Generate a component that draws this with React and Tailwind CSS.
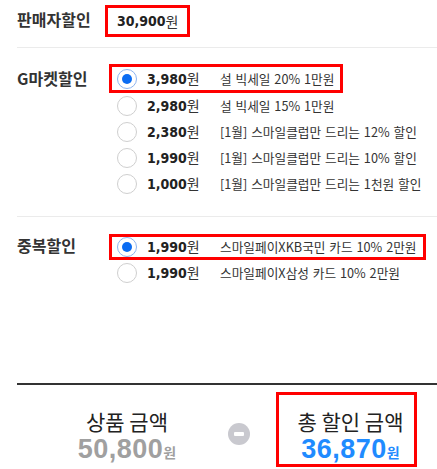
const KR = { fontFamily: '"Noto Sans CJK KR", "Noto Sans", sans-serif' };

function Radio({ checked }) {
  return checked ? (
    <span className="flex h-[20px] w-[20px] shrink-0 items-center justify-center rounded-full border border-[#8db4ef] bg-white">
      <span className="h-[10px] w-[10px] rounded-full bg-[#0b6cf2]" />
    </span>
  ) : (
    <span className="h-[20px] w-[20px] shrink-0 rounded-full border border-[#cfcfcf] bg-white" />
  );
}

function Option({ price, text, checked, tall }) {
  const box = checked
    ? `border-[3px] border-[#ff0000] pl-[5px] ${tall ? "h-[29px]" : "h-[26px]"}`
    : "h-[26px] pl-[8px]";
  return (
    <div className={`flex w-fit items-center pr-[6px] ${box}`}>
      <Radio checked={checked} />
      <span className="ml-[10px] flex w-[73px] items-baseline">
        <span className="text-[14px] font-bold text-[#222] font-['DejaVu_Sans_Condensed','DejaVu_Sans',sans-serif]">{price}</span>
        <span className="text-[14px] text-[#333]" style={KR}>원</span>
      </span>
      <span className="text-[12.7px] text-[#333] whitespace-nowrap [word-spacing:1px]" style={KR}>{text}</span>
    </div>
  );
}

function Total({ value, color }) {
  return (
    <span className={`flex h-[30px] items-baseline leading-[30px] ${color}`}>
      <span className="text-[27px] font-bold tracking-[0.5px] font-['Liberation_Sans',Arial,sans-serif]">{value}</span>
      <span className="text-[14px] font-bold">원</span>
    </span>
  );
}

export default function App() {
  const gmarket = [
    { price: "3,980", text: "설 빅세일 20% 1만원", checked: true },
    { price: "2,980", text: "설 빅세일 15% 1만원" },
    { price: "2,380", text: "[1월] 스마일클럽만 드리는 12% 할인" },
    { price: "1,990", text: "[1월] 스마일클럽만 드리는 10% 할인" },
    { price: "1,000", text: "[1월] 스마일클럽만 드리는 1천원 할인" },
  ];
  const dup = [
    { price: "1,990", text: "스마일페이XKB국민 카드 10% 2만원", checked: true },
    { price: "1,990", text: "스마일페이X삼성 카드 10% 2만원" },
  ];

  return (
    <div className="h-[469px] w-[437px] overflow-hidden bg-white" style={KR}>
      {/* 판매자할인 */}
      <div className="ml-[17px] flex h-[48px] items-start border-b border-[#ebebeb] pt-[5px]">
        <div className="flex h-[27px] w-[88px] items-center text-[16px] font-bold text-[#333]">판매자할인</div>
        <div className="flex h-[32px] items-center border-[3px] border-[#ff0000] pl-[9px] pr-[8px]">
          <span className="text-[14px] font-bold text-[#222] font-['DejaVu_Sans_Condensed','DejaVu_Sans',sans-serif]">30,900</span>
          <span className="text-[14px] text-[#333]">원</span>
        </div>
      </div>

      {/* G마켓할인 */}
      <div className="ml-[17px] flex border-b border-[#ebebeb] pt-[16px] pb-[19px]">
        <div className="flex h-[27px] w-[92px] items-center text-[16px] font-bold text-[#333]">G마켓할인</div>
        <div className="flex flex-col">
          {gmarket.map((o, i) => (
            <Option key={i} {...o} tall />
          ))}
        </div>
      </div>

      {/* 중복할인 */}
      <div className="ml-[17px] flex pt-[17px] pb-[97px]">
        <div className="flex h-[22px] w-[92px] items-center text-[16px] font-bold text-[#333]">중복할인</div>
        <div className="flex flex-col">
          {dup.map((o, i) => (
            <Option key={i} {...o} />
          ))}
        </div>
      </div>

      {/* 합계 */}
      <div className="ml-[17px] flex items-start border-t-2 border-[#333] pt-[7px]">
        <div className="ml-[10px] flex w-[200px] flex-col items-center pt-[16px]">
          <span className="h-[26px] text-[21px] leading-[26px] text-[#222]">상품 금액</span>
          <Total value="50,800" color="text-[#a0a0a0]" />
        </div>
        <div className="ml-[1px] mt-[31px] flex h-[22px] w-[22px] items-center justify-center rounded-full bg-[#c9c9cf]">
          <span className="h-[4px] w-[10px] rounded-[1px] bg-white" />
        </div>
        <div className="ml-[26px] flex h-[75px] w-[141px] flex-col items-center border-[3px] border-[#ff0000] pt-[13px] pl-[8px]">
          <span className="h-[26px] text-[21px] leading-[26px] text-[#222]">총 할인 금액</span>
          <Total value="36,870" color="text-[#1f8bff]" />
        </div>
      </div>
    </div>
  );
}
